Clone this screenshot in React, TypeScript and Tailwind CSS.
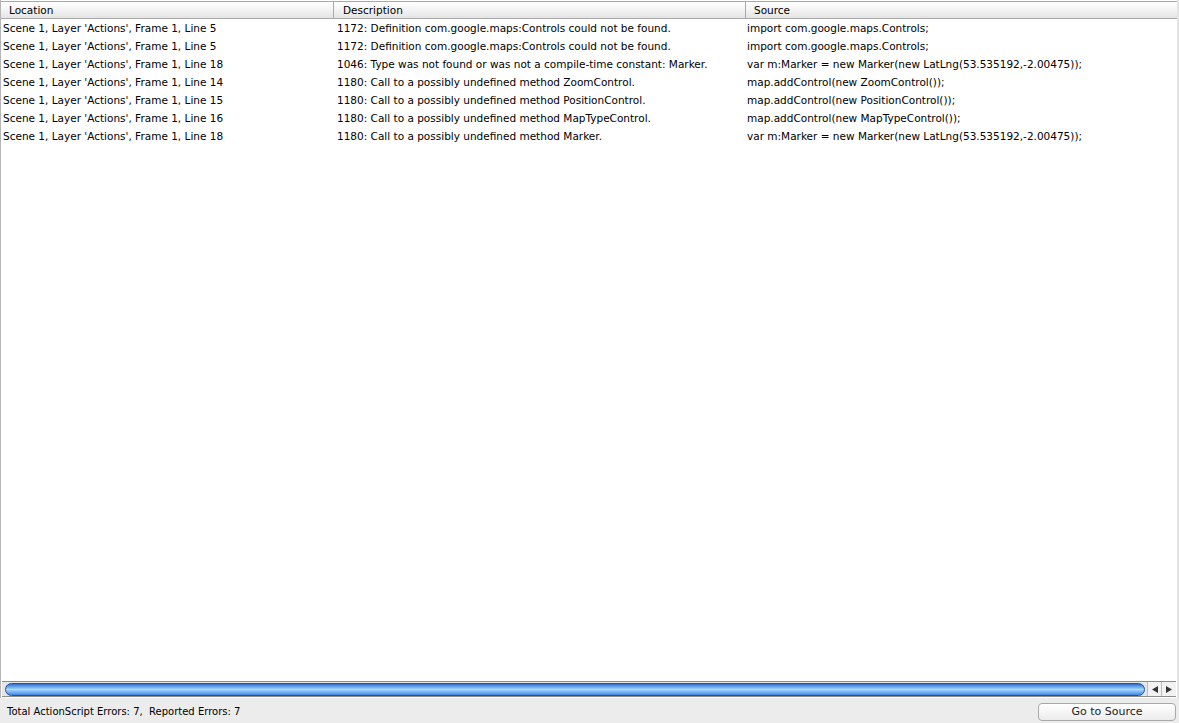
import React from "react";

const rows = [
  ["Scene 1, Layer 'Actions', Frame 1, Line 5", "1172: Definition com.google.maps:Controls could not be found.", "import com.google.maps.Controls;"],
  ["Scene 1, Layer 'Actions', Frame 1, Line 5", "1172: Definition com.google.maps:Controls could not be found.", "import com.google.maps.Controls;"],
  ["Scene 1, Layer 'Actions', Frame 1, Line 18", "1046: Type was not found or was not a compile-time constant: Marker.", "var m:Marker = new Marker(new LatLng(53.535192,-2.00475));"],
  ["Scene 1, Layer 'Actions', Frame 1, Line 14", "1180: Call to a possibly undefined method ZoomControl.", "map.addControl(new ZoomControl());"],
  ["Scene 1, Layer 'Actions', Frame 1, Line 15", "1180: Call to a possibly undefined method PositionControl.", "map.addControl(new PositionControl());"],
  ["Scene 1, Layer 'Actions', Frame 1, Line 16", "1180: Call to a possibly undefined method MapTypeControl.", "map.addControl(new MapTypeControl());"],
  ["Scene 1, Layer 'Actions', Frame 1, Line 18", "1180: Call to a possibly undefined method Marker.", "var m:Marker = new Marker(new LatLng(53.535192,-2.00475));"],
];

const App: React.FC = () => {
  return (
    <div className="w-[1179px] h-[723px] flex flex-col bg-white text-[10.5px] text-black overflow-hidden" style={{ fontFamily: "'Lucida Grande', 'DejaVu Sans', sans-serif" }}>
      <div className="flex-1 flex flex-col border-l border-[#b5b5b5] border-r-2 border-r-[#e3e3e3] min-h-0">
        {/* header */}
        <div className="flex h-[18px] mt-[1px] border-t border-b border-[#a9a9a9] bg-gradient-to-b from-white via-[#f3f3f3] to-[#e4e4e4] leading-[16px]">
          <div className="w-[333px] pl-[8px] border-r border-[#a9a9a9]">Location</div>
          <div className="w-[411px] pl-[8px] border-r border-[#a9a9a9] ml-[1px]">Description</div>
          <div className="flex-1 pl-[8px]">Source</div>
        </div>
        <div className="flex-1 flex flex-col">
          {rows.map((r, i) => (
            <div key={i} className="flex h-[18px] leading-[18px] whitespace-nowrap">
              <div className="w-[334px] pl-[2px]">{r[0]}</div>
              <div className="w-[411px] pl-[2px]">{r[1]}</div>
              <div className="flex-1 pl-[1px]">{r[2]}</div>
            </div>
          ))}
        </div>
        {/* horizontal scrollbar */}
        <div className="flex items-center h-[16px] mb-[1px] border-t border-b border-[#8e8e8e] bg-[#e6e6e6] pl-[3px] mx-[1px]">
          <div className="flex-1 h-[13px] rounded-full border border-[#1f4fa8] bg-gradient-to-b from-[#2f6fd0] via-[#a8d8fa] to-[#3f88e6]" />
          <div className="flex items-center h-full ml-[2px] bg-[#f2f2f2] border-l border-[#bdbdbd]">
            <div className="w-[14px] h-full flex items-center justify-center border-r border-[#bdbdbd]">
              <svg width="6" height="7" viewBox="0 0 6 7"><path d="M6 0 L0 3.5 L6 7 Z" fill="#333" /></svg>
            </div>
            <div className="w-[14px] h-full flex items-center justify-center">
              <svg width="6" height="7" viewBox="0 0 6 7"><path d="M0 0 L6 3.5 L0 7 Z" fill="#333" /></svg>
            </div>
          </div>
        </div>
      </div>
      {/* status bar */}
      <div className="h-[25px] flex items-center justify-between bg-[#ececec] pl-[7px] pr-[3px] pt-[2px]">
        <span className="text-[10px]">Total ActionScript Errors: 7,&nbsp; Reported Errors: 7</span>
        <button className="w-[138px] h-[18px] rounded-[4px] border border-[#a8a8a8] bg-gradient-to-b from-white to-[#ececec] text-[11px] text-[#222] leading-[16px]">Go to Source</button>
      </div>
    </div>
  );
};

export default App;
